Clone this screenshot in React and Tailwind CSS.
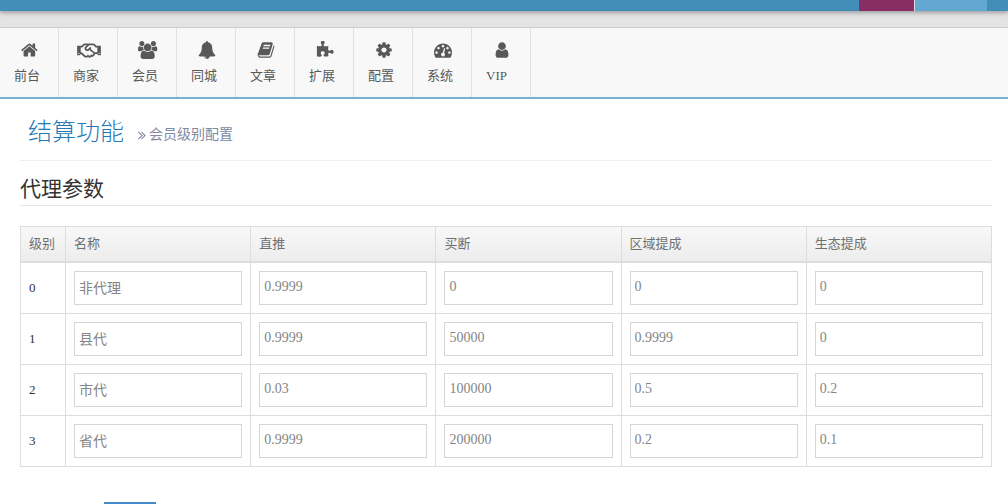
import { FaRegHandshake } from "react-icons/fa";

const ICONS = {
  home: "M1408 992v480q0 26-19 45t-45 19h-384v-384h-256v384h-384q-26 0-45-19t-19-45v-480q0-1 .5-3t.5-3l575-474 575 474q1 2 1 6zm223-69l-62 74q-8 9-21 11h-3q-13 0-21-7l-692-577-692 577q-12 8-24 7-13-2-21-11l-62-74q-8-10-7-23.5t11-21.5l719-599q32-26 76-26t76 26l244 204v-195q0-14 9-23t23-9h192q14 0 23 9t9 23v408l219 182q10 8 11 21.5t-7 23.5z",
  users:
    "M593 896q-162 5-265 128h-134q-82 0-138-40.5t-56-118.5q0-353 124-353 6 0 43.5 21t97.5 42.5 119 21.5q67 0 133-23-5 37-5 66 0 139 81 256zm1071 637q0 120-73 189.5t-194 69.5h-874q-121 0-194-69.5t-73-189.5q0-53 3.5-103.5t14-109 26.5-108.5 43-97.5 62-81 85.5-53.5 111.5-20q10 0 43 21.5t73 48 107 48 135 21.5 135-21.5 107-48 73-48 43-21.5q61 0 111.5 20t85.5 53.5 62 81 43 97.5 26.5 108.5 14 109 3.5 103.5zm-1024-1277q0 106-75 181t-181 75-181-75-75-181 75-181 181-75 181 75 75 181zm704 384q0 159-112.5 271.5t-271.5 112.5-271.5-112.5-112.5-271.5 112.5-271.5 271.5-112.5 271.5 112.5 112.5 271.5zm576 225q0 78-56 118.5t-138 40.5h-134q-103-123-265-128 81-117 81-256 0-29-5-66 66 23 133 23 59 0 119-21.5t97.5-42.5 43.5-21q124 0 124 353zm-128-609q0 106-75 181t-181 75-181-75-75-181 75-181 181-75 181 75 75 181z",
  bell: "M912 1696q0-16-16-16-59 0-101.5-42.5t-42.5-101.5q0-16-16-16t-16 16q0 73 51.5 124.5t124.5 51.5q16 0 16-16zm816-288q0 52-38 90t-90 38h-448q0 106-75 181t-181 75-181-75-75-181h-448q-52 0-90-38t-38-90q50-42 91-88t85-119.5 74.5-158.5 50-206 19.5-260q0-152 117-282.5t307-158.5q-8-19-8-39 0-40 28-68t68-28 68 28 28 68q0 20-8 39 190 28 307 158.5t117 282.5q0 139 19.5 260t50 206 74.5 158.5 85 119.5 91 88z",
  book: "M1703 478q40 57 18 129l-275 906q-19 64-76.5 107.5t-122.5 43.5h-923q-77 0-148.5-53.5t-99.5-131.5q-24-67-2-127 0-4 3-27t4-37q1-8-3-21.5t-3-19.5q2-11 8-21t16.5-23.5 16.5-23.5q23-38 45-91.5t30-91.5q3-10 .5-30t-.5-28q3-11 17-28t17-23q21-36 42-92t25-90q1-9-2.5-32t.5-28q4-13 22-30.5t22-22.5q19-26 42.5-84.5t27.5-96.5q1-8-3-25.5t-2-26.5q2-8 9-18t18-23 17-21q8-12 16.5-30.5t15-35 16-36 19.5-32 26.5-23.5 36-11.5 47.5 5.5l-1 3q38-9 51-9h761q74 0 114 56t18 130l-274 906q-36 119-71.5 153.5t-128.5 34.5h-869q-27 0-38 15-11 16-1 43 24 70 144 70h923q29 0 56-15.5t35-41.5l300-987q7-22 5-57 38 15 59 43zm-1064 2q-4 13 2 22.5t20 9.5h608q13 0 25.5-9.5t16.5-22.5l21-64q4-13-2-22.5t-20-9.5h-608q-13 0-25.5 9.5t-16.5 22.5zm-83 256q-4 13 2 22.5t20 9.5h608q13 0 25.5-9.5t16.5-22.5l21-64q4-13-2-22.5t-20-9.5h-608q-13 0-25.5 9.5t-16.5 22.5z",
  puzzle:
    "M1755 1082q0 81-44.5 135t-123.5 54q-41 0-77.5-17.5t-59-38-56.5-38-71-17.5q-110 0-110 124 0 39 16 115t15 115v5q-22 0-33 1-34 3-97.5 11.5t-115.5 13.5-98 5q-61 0-103-26.5t-42-83.5q0-37 17.5-71t38-56.5 38-59 17.5-77.5q0-79-54-123.5t-135-44.5q-84 0-143 45.5t-59 127.5q0 43 15 83t33.5 64.5 33.5 53 15 50.5q0 45-46 89-37 35-117 35-95 0-245-24-9-2-27.5-4t-27.5-4l-13-2q-1 0-3-1-2 0-2-1v-1024q2 1 17.5 3.5t34 5 21.5 3.5q150 24 245 24 80 0 117-35 46-44 46-89 0-22-15-50.5t-33.5-53-33.5-64.5-15-83q0-82 59-127.5t144-45.5q80 0 134 44.5t54 123.5q0 41-17.5 77.5t-38 59-38 56.5-17.5 71q0 57 42 83.5t103 26.5q64 0 180-15t163-17v2q-1 2-3.5 17.5t-5 34-3.5 21.5q-24 150-24 245 0 80 35 117 44 46 89 46 22 0 50.5-15t53-33.5 64.5-33.5 83-15q82 0 127.5 59t45.5 143z",
  cog: "M1152 896q0-106-75-181t-181-75-181 75-75 181 75 181 181 75 181-75 75-181zm512-109v222q0 12-8 23t-20 13l-185 28q-19 54-39 91 35 50 107 138 10 12 10 25t-9 23q-27 37-99 108t-94 71q-12 0-26-9l-138-108q-44 23-91 38-16 136-29 186-7 28-36 28h-222q-14 0-24.5-8.5t-11.5-21.5l-28-184q-49-16-90-37l-141 107q-10 9-25 9-14 0-25-11-126-114-165-168-7-10-7-23 0-12 8-23 15-21 51-66.5t54-70.5q-27-50-41-99l-183-27q-13-2-21-12.5t-8-23.5v-222q0-12 8-23t19-13l186-28q14-46 39-92-40-57-107-138-10-12-10-24 0-10 9-23 26-36 98.5-107.5t94.5-71.5q13 0 26 10l138 107q44-23 91-38 16-136 29-186 7-28 36-28h222q14 0 24.5 8.5t11.5 21.5l28 184q49 16 90 37l142-107q9-9 24-9 13 0 25 10 129 119 165 170 7 8 7 22 0 12-8 23-15 21-51 66.5t-54 70.5q26 50 41 98l183 28q13 2 21 12.5t8 23.5z",
  dashboard:
    "M384 1152q0-53-37.5-90.5t-90.5-37.5-90.5 37.5-37.5 90.5 37.5 90.5 90.5 37.5 90.5-37.5 37.5-90.5zm192-448q0-53-37.5-90.5t-90.5-37.5-90.5 37.5-37.5 90.5 37.5 90.5 90.5 37.5 90.5-37.5 37.5-90.5zm428 481l101-382q6-26-7.5-48.5t-38.5-29.5-48 6.5-30 39.5l-101 382q-60 5-107 43.5t-63 98.5q-20 77 20 146t117 89 146-20 89-117q16-60-6-117t-72-91zm660-33q0-53-37.5-90.5t-90.5-37.5-90.5 37.5-37.5 90.5 37.5 90.5 90.5 37.5 90.5-37.5 37.5-90.5zm-640-640q0-53-37.5-90.5t-90.5-37.5-90.5 37.5-37.5 90.5 37.5 90.5 90.5 37.5 90.5-37.5 37.5-90.5zm448 192q0-53-37.5-90.5t-90.5-37.5-90.5 37.5-37.5 90.5 37.5 90.5 90.5 37.5 90.5-37.5 37.5-90.5zm320 448q0 261-141 483-19 29-54 29h-1402q-35 0-54-29-141-221-141-483 0-182 71-348t191-286 286-191 348-71 348 71 286 191 191 286 71 348z",
  user: "M1536 1399q0 109-62.5 187t-150.5 78h-854q-88 0-150.5-78t-62.5-187q0-85 8.5-160.5t31.5-152 58.5-131 94-89 134.5-34.5q131 128 313 128t313-128q76 0 134.5 34.5t94 89 58.5 131 31.5 152 8.5 160.5zm-256-887q0 159-112.5 271.5t-271.5 112.5-271.5-112.5-112.5-271.5 112.5-271.5 271.5-112.5 271.5 112.5 112.5 271.5z",
  angles:
    "M979 960q0 13-10 23l-466 466q-10 10-23 10t-23-10l-50-50q-10-10-10-23t10-23l393-393-393-393q-10-10-10-23t10-23l50-50q10-10 23-10t23 10l466 466q10 10 10 23zm384 0q0 13-10 23l-466 466q-10 10-23 10t-23-10l-50-50q-10-10-10-23t10-23l393-393-393-393q-10-10-10-23t10-23l50-50q10-10 23-10t23 10l466 466q10 10 10 23z",
};

const MENU = [
  { label: "前台", icon: "home" },
  { label: "商家", icon: "handshake" },
  { label: "会员", icon: "users" },
  { label: "同城", icon: "bell" },
  { label: "文章", icon: "book" },
  { label: "扩展", icon: "puzzle" },
  { label: "配置", icon: "cog" },
  { label: "系统", icon: "dashboard" },
  { label: "VIP", icon: "user" },
];

const COLUMNS = ["名称", "直推", "买断", "区域提成", "生态提成"];

const LEVELS = [
  ["非代理", "0.9999", "0", "0", "0"],
  ["县代", "0.9999", "50000", "0.9999", "0"],
  ["市代", "0.03", "100000", "0.5", "0.2"],
  ["省代", "0.9999", "200000", "0.2", "0.1"],
];

const Icon = ({ name, className }) => {
  if (name === "handshake") {
    return <FaRegHandshake className="h-[19px] w-6" aria-hidden="true" />;
  }

  return (
    <svg
      viewBox={name === "users" ? "0 0 1920 1792" : "0 0 1792 1792"}
      fill="currentColor"
      className={className}
      aria-hidden="true"
    >
      <path d={ICONS[name]} />
    </svg>
  );
};

const TopBar = () => (
  <header className="relative flex h-[11px] justify-end bg-[#438eb9] pr-[21px] shadow-[0_2px_4px_rgba(0,0,0,0.3)]">
    <div className="w-[55px] bg-[#892e65]" />
    <div className="w-[73px] border-l border-[#ddd] bg-[#62a8d1]" />
  </header>
);

const MainMenu = () => (
  <nav className="flex border-t border-b-2 border-t-[#ccc] border-b-[#79b0ce] bg-[#f8f8f8]">
    {MENU.map(({ label, icon }) => (
      <a
        key={label}
        href="#"
        className="flex h-[69px] w-[59px] flex-col border-r border-[#e0e0e0] pt-3 text-[13px] leading-5 text-[#585858]"
      >
        <span className="flex h-5 items-center justify-center pl-0.5">
          <Icon name={icon} className="h-[18px]" />
        </span>
        <span className="mt-1.5 pl-3.5">{label}</span>
      </a>
    ))}
  </nav>
);

const LevelTable = () => (
  <table className="mt-5 w-full table-fixed border-collapse text-[13px] leading-5">
    <thead>
      <tr className="bg-linear-to-b from-[#f8f8f8] to-[#ececec] text-left text-[#707070]">
        <th className="w-[45px] border border-b-2 border-[#ddd] px-2 py-[7px] font-normal">
          级别
        </th>
        {COLUMNS.map((column) => (
          <th
            key={column}
            className="border border-b-2 border-[#ddd] px-2 py-[7px] font-normal"
          >
            {column}
          </th>
        ))}
      </tr>
    </thead>
    <tbody>
      {LEVELS.map((values, level) => (
        <tr key={level}>
          <td className="border border-[#ddd] p-2 text-[#333]">{level}</td>
          {values.map((value, index) => (
            <td key={COLUMNS[index]} className="border border-[#ddd] p-2">
              <input
                type="text"
                aria-label={`${level} ${COLUMNS[index]}`}
                defaultValue={value}
                className="block h-[34px] w-full border border-[#d5d5d5] bg-white px-1 pb-0.5 text-sm text-[#858585]"
              />
            </td>
          ))}
        </tr>
      ))}
    </tbody>
  </table>
);

const App = () => {
  return (
    <div className="h-screen overflow-hidden bg-white font-['Liberation_Serif','Noto_Sans_CJK_SC',serif]">
      <div className="bg-[#e4e4e4] pb-4">
        <TopBar />
      </div>
      <MainMenu />

      <main className="px-5 pr-4">
        {/* Page header */}
        <div className="flex items-center border-b border-dotted border-[#e2e2e2] px-2 pt-[17px] pb-3">
          <h1 className="text-2xl leading-8 font-light text-[#2679b5]">
            结算功能
          </h1>
          <small className="mt-1.5 ml-[11px] flex items-center text-sm leading-5 text-[#8089a0]">
            <Icon name="angles" className="h-3.5" />
            会员级别配置
          </small>
        </div>

        <h2 className="mt-3 border-b border-[#e5e5e5] text-[21px] leading-8 text-[#333]">
          代理参数
        </h2>

        <LevelTable />

        {/* Form actions */}
        <div className="mt-[35px] pl-[84px]">
          <button
            type="submit"
            aria-label="保存"
            className="block h-9 w-[52px] bg-[#428bca]"
          />
        </div>
      </main>
    </div>
  );
};
export default App;
